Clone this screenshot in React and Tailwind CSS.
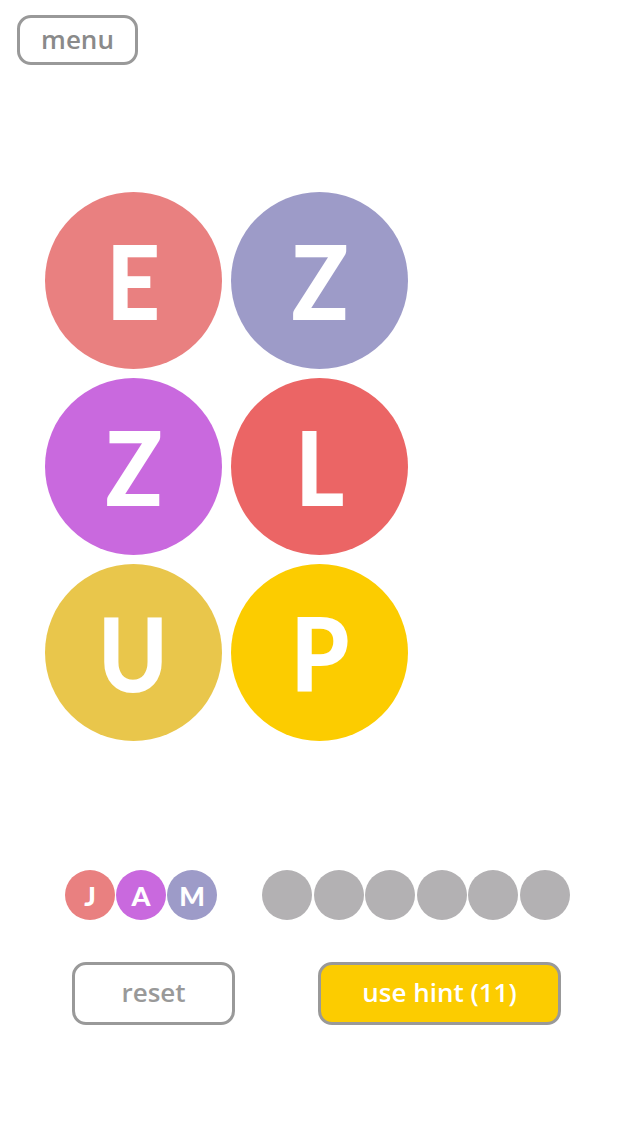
import React from "react";

const TILES = [
  { letter: "E", color: "bg-[#e98080]" },
  { letter: "Z", color: "bg-[#9d9bc8]" },
  { letter: "Z", color: "bg-[#c969de]" },
  { letter: "L", color: "bg-[#eb6565]" },
  { letter: "U", color: "bg-[#e9c64b]" },
  { letter: "P", color: "bg-[#fccc00]" },
];

const PICKED = [
  { letter: "J", color: "bg-[#e98080]" },
  { letter: "A", color: "bg-[#c969de]" },
  { letter: "M", color: "bg-[#9d9bc8]" },
];

const font = { fontFamily: "'Open Sans', Lato, sans-serif" };

export default function App() {
  return (
    <div className="w-[640px] h-[1136px] bg-white overflow-hidden" style={font}>
      {/* top bar */}
      <div className="pt-[15px] pl-[17px]">
        <button className="w-[121px] h-[50px] rounded-[14px] border-[3px] border-[#999] text-[#8a8a8a] text-[26px] font-semibold leading-none pb-[3px]">
          menu
        </button>
      </div>

      {/* letter board */}
      <div className="mt-[127px] pl-[45px]">
        <div className="grid grid-cols-[177px_177px] gap-x-[9px] gap-y-[9px]">
          {TILES.map((t, i) => (
            <div
              key={i}
              className={`w-[177px] h-[177px] rounded-full ${t.color} flex items-center justify-center`}
            >
              <span className="text-white text-[102px] font-black leading-none scale-x-[0.92]" style={{ fontFamily: "Lato, sans-serif" }}>
                {t.letter}
              </span>
            </div>
          ))}
        </div>
      </div>

      {/* answer slots */}
      <div className="mt-[129px] pl-[65px] flex items-center">
        <div className="flex gap-[1px]">
          {PICKED.map((p, i) => (
            <div
              key={i}
              className={`w-[50px] h-[50px] rounded-full ${p.color} flex items-center justify-center`}
            >
              <span className="text-white text-[27px] font-black leading-none" style={{ fontFamily: "Lato, sans-serif" }}>
                {p.letter}
              </span>
            </div>
          ))}
        </div>
        <div className="ml-[45px] flex gap-[1.5px]">
          {[0, 1, 2, 3, 4, 5].map((i) => (
            <div key={i} className="w-[50px] h-[50px] rounded-full bg-[#b3b1b3]" />
          ))}
        </div>
      </div>

      {/* actions */}
      <div className="mt-[42px] flex items-center">
        <button className="ml-[72px] w-[163px] h-[63px] rounded-[14px] border-[3px] border-[#999] bg-white text-[#999] text-[26px] font-semibold leading-none pb-[3px]">
          reset
        </button>
        <button className="ml-[83px] w-[243px] h-[63px] rounded-[14px] border-[3px] border-[#999] bg-[#fccc00] text-white text-[26px] font-semibold leading-none pb-[3px]">
          use hint (11)
        </button>
      </div>
    </div>
  );
}
